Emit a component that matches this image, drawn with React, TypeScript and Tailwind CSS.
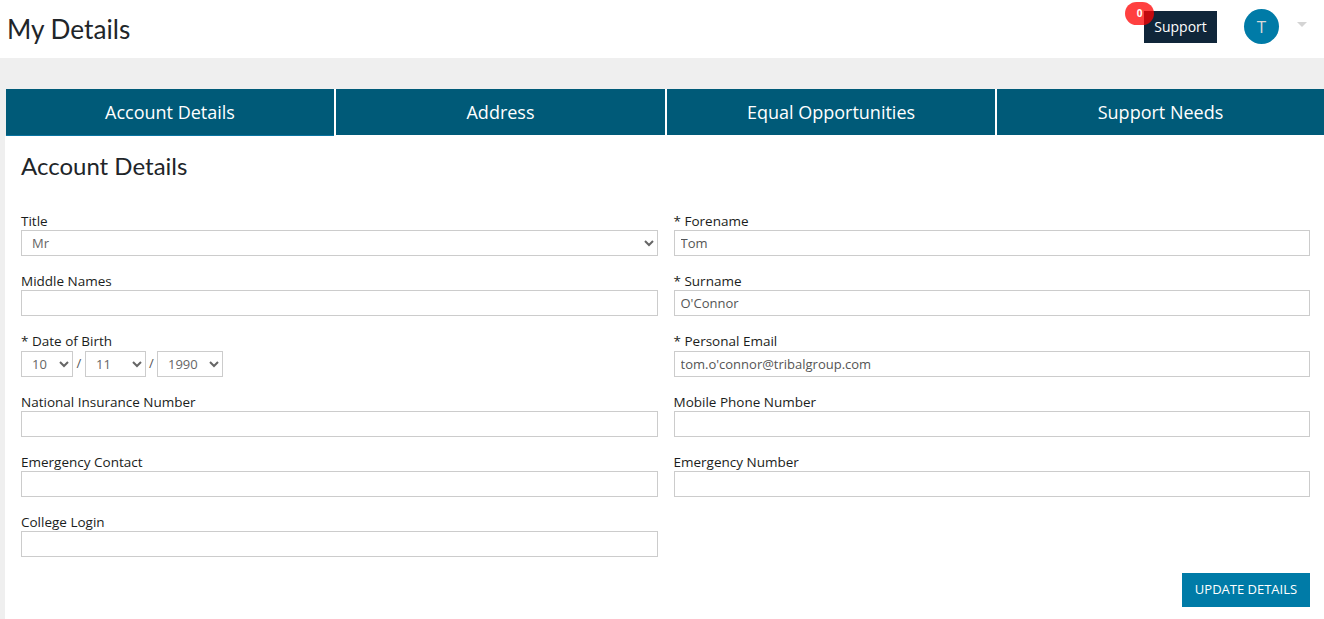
import React from "react";

const openSans = "font-['Open_Sans',sans-serif]";

function Label({ children }: { children: React.ReactNode }) {
  return <label className="block h-[17px] text-[13.5px] leading-[17px] text-[#1a1d20]">{children}</label>;
}

function Field({ label, value = "" }: { label: string; value?: string }) {
  return (
    <div className="h-[60px] pt-[1px]">
      <Label>{label}</Label>
      <input
        readOnly
        value={value}
        className="block h-[26px] w-full border border-[#cccccc] bg-white px-[6px] text-[13px] text-[#555555] outline-none"
      />
    </div>
  );
}

function Select({ value, className }: { value: string; className: string }) {
  return (
    <select
      defaultValue={value}
      className={`h-[26px] border border-[#cccccc] bg-white text-[13px] text-[#666666] outline-none ${className}`}
    >
      <option>{value}</option>
    </select>
  );
}

const tabs = ["Account Details", "Address", "Equal Opportunities", "Support Needs"];

export default function App() {
  return (
    <div className={`${openSans} h-[619px] overflow-hidden bg-[#efefef]`}>
      <header className="flex h-[58px] items-center justify-between bg-white pl-[7px]">
        <h1 className="font-['Lato',sans-serif] text-[26.2px] leading-none text-[#212529]">My Details</h1>
        <div className="flex items-center pr-[17px]">
          <div className="relative mt-[-4px]">
            <div className="flex h-[32px] w-[73px] items-center justify-center bg-[#10263a] pb-[2px] text-[14px] text-white">Support</div>
            <span className="absolute left-[-19px] top-[-9px] flex h-[23px] w-[29px] items-center justify-center rounded-full bg-[#ff0000]/75 text-[10px] font-bold text-white">0</span>
          </div>
          <div className="ml-[27px] mt-[-5px] flex h-[35px] w-[35px] items-center justify-center rounded-full bg-[#007ba7] text-[17px] text-[#d8d8d8]">T</div>
          <div className="ml-[18px] mt-[-10px] h-0 w-0 border-x-[5px] border-t-[5px] border-x-transparent border-t-[#d4d4d4]" />
        </div>
      </header>

      <main className="mt-[31px]">
        <nav className="ml-[6px] grid h-[47px] grid-cols-[328px_329px_328px_1fr] items-start gap-[2px] bg-white">
          {tabs.map((t, i) => (
            <div
              key={t}
              className={`box-content flex h-[46px] items-center justify-center bg-[#005a78] text-[18px] text-white ${i === 0 ? "border-b border-[#0a74a0]" : ""}`}
            >
              {t}
            </div>
          ))}
        </nav>

        <section className="ml-[5px] h-[484px] bg-white px-[16px] pr-[14px]">
          <h2 className="pt-[16px] font-['Lato',sans-serif] text-[24px] leading-[28px] text-[#212529]">Account Details</h2>

          <form className="mt-[32px] grid grid-cols-2 gap-x-[16px]">
            <div>
              <div className="h-[60px] pt-[1px]">
                <Label>Title</Label>
                <Select value="Mr" className="block w-full pl-[6px]" />
              </div>
              <Field label="Middle Names" />
              <div className="h-[61px] pt-[1px]">
                <Label>* Date of Birth</Label>
                <div className="mt-[1px] flex items-center text-[13px] text-[#555555]">
                  <Select value="10" className="w-[52px] pl-[6px]" />
                  <span className="w-[12px] text-center">/</span>
                  <Select value="11" className="w-[61px] pl-[6px]" />
                  <span className="w-[11px] text-center">/</span>
                  <Select value="1990" className="w-[66px] pl-[6px]" />
                </div>
              </div>
              <Field label="National Insurance Number" />
              <Field label="Emergency Contact" />
              <Field label="College Login" />
            </div>
            <div>
              <Field label="* Forename" value="Tom" />
              <Field label="* Surname" value="O'Connor" />
              <div className="h-[61px] pt-[1px]">
                <Label>* Personal Email</Label>
                <input
                  readOnly
                  value="tom.o'connor@tribalgroup.com"
                  className="mt-[1px] block h-[26px] w-full border border-[#cccccc] bg-white px-[6px] text-[13px] text-[#555555] outline-none"
                />
              </div>
              <Field label="Mobile Phone Number" />
              <Field label="Emergency Number" />
            </div>
          </form>

          <div className="flex justify-end">
            <button className="h-[34px] w-[128px] bg-[#007ba7] text-[13px] text-white">UPDATE DETAILS</button>
          </div>
        </section>
      </main>
    </div>
  );
}
